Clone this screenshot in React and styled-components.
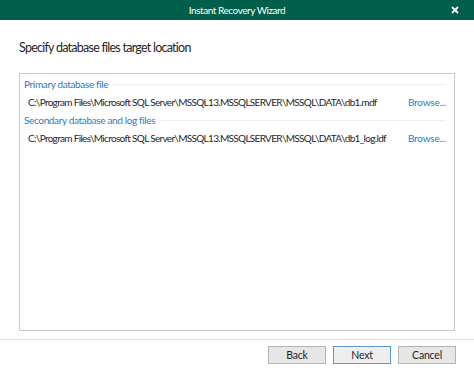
import React from 'react'
import styled, { createGlobalStyle } from 'styled-components'

const GlobalStyle = createGlobalStyle`
*{margin: 0;
padding: 0;
box-sizing: border-box;
}
body{
background: #ffffff;
font-family: Lato, 'Open Sans', sans-serif;
}
`

const Window = styled.div`
display: flex;
flex-direction: column;
width: 474px;
height: 372px;
background: #ffffff;
overflow: hidden;
`

const TitleBar = styled.div`
display: grid;
grid-template-columns: 1fr auto 1fr;
align-items: center;
height: 20px;
padding-right: 15px;
background-color: #005f4b;
color: #ffffff;
font-size: 10px;
letter-spacing: -0.45px;
`

const TitleText = styled.span`
grid-column: 2;
padding-left: 15px;
`

const CloseBox = styled.span`
grid-column: 3;
justify-self: end;
display: flex;
width: 8px;
height: 8px;
`

const Content = styled.div`
flex: 1;
display: flex;
flex-direction: column;
padding: 0 19px 0 19px;
`

const Heading = styled.h1`
font-weight: 400;
font-size: 12.5px;
letter-spacing: -0.75px;
line-height: 18px;
color: #262626;
padding: 19px 0 0 0;
margin-bottom: 16px;
`

const Panel = styled.div`
flex: 1;
display: flex;
flex-direction: column;
border: 1px solid #cacaca;
padding: 1px 8px 0 0;
margin-bottom: 8px;
`

const GroupHeader = styled.div`
display: flex;
align-items: center;
gap: 4px;
height: 18px;
padding-left: 4px;
color: #2b79c2;
font-size: 10px;
letter-spacing: -0.35px;
white-space: nowrap;
&::after{
content: '';
flex: 1;
border-bottom: 1px solid #efefef;
}
`

const FileRow = styled.div`
display: flex;
align-items: center;
justify-content: space-between;
height: 18px;
padding-left: 8px;
font-size: 10px;
letter-spacing: -0.68px;
color: #1f1f1f;
white-space: nowrap;
`

const Browse = styled.span`
color: #2b79c2;
letter-spacing: -0.2px;
`

const Footer = styled.div`
display: flex;
justify-content: flex-end;
gap: 7px;
border-top: 1px solid #e6e6e6;
padding: 6px 18px 8px 0;
`

const Button = styled.button`
width: 58px;
height: 18px;
font-family: Lato, 'Open Sans', sans-serif;
font-size: 10.5px;
letter-spacing: -0.2px;
color: #1f1f1f;
background: ${p => p.$primary ? '#eeeeee' : '#e6e6e6'};
border: 1px solid ${p => p.$primary ? '#5a9bd5' : '#b4b4b4'};
`

const files = [
  {label: 'Primary database file', path: 'C:\\Program Files\\Microsoft SQL Server\\MSSQL13.MSSQLSERVER\\MSSQL\\DATA\\db1.mdf'},
  {label: 'Secondary database and log files', path: 'C:\\Program Files\\Microsoft SQL Server\\MSSQL13.MSSQLSERVER\\MSSQL\\DATA\\db1_log.ldf'},
]

const App = () => {
    return(
        <Window>
            <GlobalStyle/>
            <TitleBar>
                <TitleText>Instant Recovery Wizard</TitleText>
                <CloseBox>
                    <svg width="8" height="8" viewBox="0 0 8 8">
                        <line x1="1" y1="1" x2="7" y2="7" stroke="#ffffff" strokeWidth="1.8"/>
                        <line x1="7" y1="1" x2="1" y2="7" stroke="#ffffff" strokeWidth="1.8"/>
                    </svg>
                </CloseBox>
            </TitleBar>
            <Content>
                <Heading>Specify database files target location</Heading>
                <Panel>
                    {files.map(f => (
                        <React.Fragment key={f.label}>
                            <GroupHeader>{f.label}</GroupHeader>
                            <FileRow>
                                <span>{f.path}</span>
                                <Browse>Browse...</Browse>
                            </FileRow>
                        </React.Fragment>
                    ))}
                </Panel>
            </Content>
            <Footer>
                <Button>Back</Button>
                <Button $primary>Next</Button>
                <Button>Cancel</Button>
            </Footer>
        </Window>
    )
}

export default App
